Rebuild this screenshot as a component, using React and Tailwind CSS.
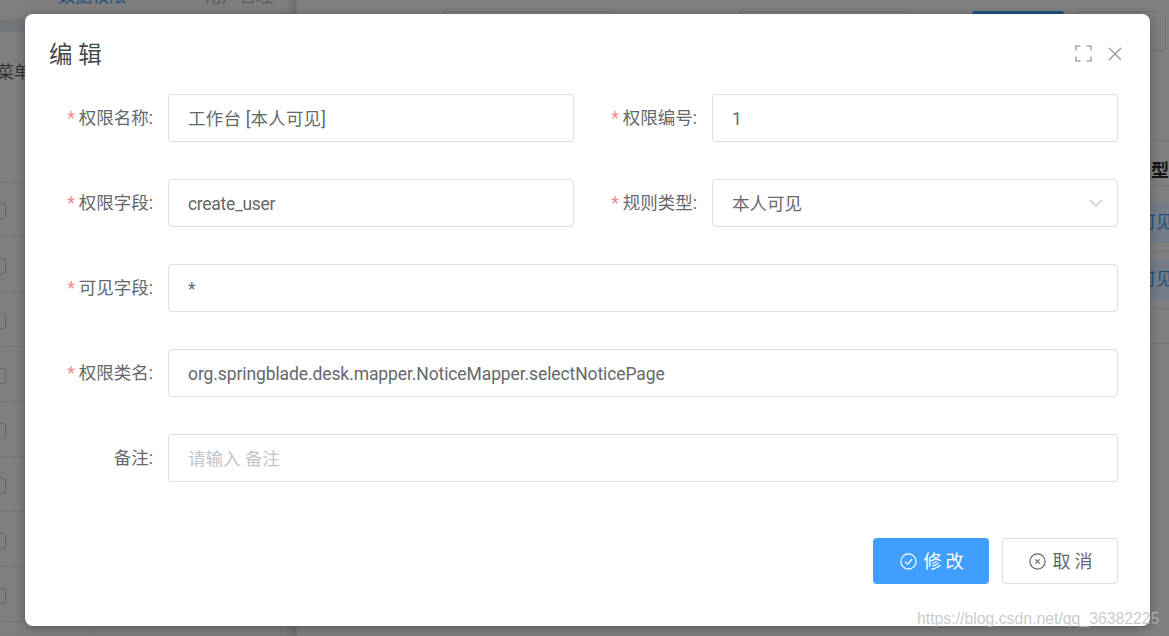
const cjk = { fontFamily: 'Roboto, "Noto Sans CJK SC", sans-serif' };

function Field({ label, required = true, children }) {
  return (
    <div className="flex h-12 items-center min-w-0 flex-1">
      <label className="w-[114px] shrink-0 whitespace-nowrap text-right text-[17.5px] text-[#66686c]">
        {required && <span className="mr-[4px] text-[#f78989]">*</span>}
        {label}:
      </label>
      <div className="ml-[15px] flex-1 min-w-0">{children}</div>
    </div>
  );
}

function Input({ value, placeholder, chevron, spacing = "" }) {
  return (
    <div className="flex h-12 items-center justify-between rounded-[4px] border border-[#dcdfe6] bg-white pl-[19px] pr-[14px] text-[17.5px] text-[#66686c]">
      <span className={`pt-[2px] ${placeholder ? "text-[#c0c4cc]" : ""} ${spacing}`}>{value || placeholder}</span>
      {chevron && (
        <svg width="14" height="8" viewBox="0 0 14 8" fill="none" stroke="#c0c4cc" strokeWidth="1.2">
          <path d="M1 1l6 6 6-6" />
        </svg>
      )}
    </div>
  );
}

function Backdrop() {
  const rows = [182, 236, 291, 346, 401, 456, 511, 566, 621];
  return (
    <div className="absolute inset-0">
      <div className="absolute left-0 top-0 h-full w-[297px] border-r border-[#767676] bg-[#7f7f7f] shadow-[inset_-10px_0_8px_-4px_rgba(0,0,0,0.12)]" />
      <div className="absolute left-0 top-[19px] h-[13px] w-[25px] bg-[#74777a]" />
      <div className="absolute left-[-3px] top-[60px] text-[17px] text-[#303030]">菜单</div>
      <div className="absolute left-[58px] top-[-16px] text-[17px] text-[#1d4f80]">数据权限</div>
      <div className="absolute left-[136px] top-[-16px] text-[14px] text-[#1d4f80]">×</div>
      <div className="absolute left-[205px] top-[-16px] text-[17px] text-[#5a5a5a]">用户管理</div>
      {rows.map((y) => (
        <div key={y} className="absolute left-0 h-px w-[25px] bg-[#757575]" style={{ top: y }} />
      ))}
      <div className="absolute left-0 top-[621px] h-px w-[297px] bg-[#757575]" />
      {[203, 258, 313, 368, 423, 478, 533, 588].map((y) => (
        <div key={y} className="absolute left-[-10px] h-4 w-4 rounded-[2px] border border-[#686868]" style={{ top: y }} />
      ))}
      <div className="absolute left-[93px] top-[621px] h-[15px] w-px bg-[#757575]" />
      <div className="absolute left-[280px] top-[621px] h-[15px] w-px bg-[#757575]" />
      <div className="absolute left-[442px] top-[11px] h-[3px] w-[173px] rounded-t-[4px] border-x border-t border-[#727272]" />
      <div className="absolute left-[738px] top-[11px] h-[3px] w-[172px] rounded-t-[4px] border-x border-t border-[#727272]" />
      <div className="absolute left-[972px] top-[11px] h-[3px] w-[92px] rounded-t-[4px] bg-[#205080]" />
      <div className="absolute left-[1076px] top-[11px] h-[40px] w-[90px] rounded-[4px] border border-[#727272]" />
      {[140, 185, 251, 308, 343].map((y) => (
        <div key={y} className="absolute left-[1150px] h-px w-[19px] bg-[#757575]" style={{ top: y }} />
      ))}
      <div className="absolute left-[1133px] top-[157px] whitespace-nowrap text-[18px] font-bold text-[#151515]">类型</div>
      <div className="absolute left-[1150px] top-[203px] h-[40px] w-[19px] border-y border-[#6f7b8a] bg-[#747d88]" />
      <div className="absolute left-[1150px] top-[260px] h-[40px] w-[19px] border-y border-[#6f7b8a] bg-[#747d88]" />
      <div className="absolute left-[1139px] top-[210px] whitespace-nowrap text-[17px] text-[#1d4f80]">可见</div>
      <div className="absolute left-[1139px] top-[267px] whitespace-nowrap text-[17px] text-[#1d4f80]">可见</div>
    </div>
  );
}

export default function App() {
  return (
    <div className="relative h-[636px] w-[1169px] overflow-hidden bg-[#808080]" style={cjk}>
      <Backdrop />
      <div className="relative ml-[25px] mt-[14px] inline-block h-[612px] w-[1125px] rounded-[8px] bg-white align-top shadow-[0_2px_12px_rgba(0,0,0,0.3)]">
        <div className="flex items-center justify-between pl-[24px] pr-[27px] pt-[24px]">
          <h1 className="text-[23.5px] leading-[34px] font-normal text-[#48494b]">编 辑</h1>
          <div className="mb-[3px] flex items-center gap-[15px]">
            <svg width="17" height="17" viewBox="0 0 17 17" fill="none" stroke="#a9adb5" strokeWidth="1.7">
              <path d="M1 5.5V1h4.5M11.5 1H16v4.5M16 11.5V16h-4.5M5.5 16H1v-4.5" />
            </svg>
            <svg width="16" height="16" viewBox="0 0 16 16" fill="none" stroke="#909399" strokeWidth="1.2">
              <path d="M2 2l12 12M14 2L2 14" />
            </svg>
          </div>
        </div>
        <div className="ml-[14px] mr-[32px] mt-[22px] flex flex-col gap-[37px]">
          <div className="flex">
            <div className="w-[535px] shrink-0"><Field label="权限名称"><Input value="工作台 [本人可见]" spacing="tracking-[0.2px]" /></Field></div>
            <div className="ml-[9px] flex-1"><Field label="权限编号"><Input value="1" /></Field></div>
          </div>
          <div className="flex">
            <div className="w-[535px] shrink-0"><Field label="权限字段"><Input value="create_user" spacing="tracking-[-0.3px]" /></Field></div>
            <div className="ml-[9px] flex-1"><Field label="规则类型"><Input value="本人可见" chevron /></Field></div>
          </div>
          <Field label="可见字段"><Input value="*" /></Field>
          <Field label="权限类名"><Input value="org.springblade.desk.mapper.NoticeMapper.selectNoticePage" spacing="tracking-[-0.1px]" /></Field>
          <Field label="备注" required={false}><Input placeholder="请输入 备注" /></Field>
        </div>
        <div className="mr-[32px] mt-[56px] flex justify-end gap-[13px]">
          <button className="flex h-[46px] w-[116px] items-center justify-center gap-[7px] rounded-[4px] bg-[#409eff] pl-[5px] text-[18px] tracking-[4px] text-white">
            <svg width="17" height="17" viewBox="0 0 17 17" fill="none" stroke="currentColor" strokeWidth="1.2">
              <circle cx="8.5" cy="8.5" r="7.6" /><path d="M5 8.7l2.6 2.5L12.2 6" />
            </svg>
            修改
          </button>
          <button className="flex h-[46px] w-[116px] items-center justify-center gap-[7px] rounded-[4px] border border-[#dcdfe6] bg-white pl-[5px] text-[18px] tracking-[4px] text-[#66686c]">
            <svg width="17" height="17" viewBox="0 0 17 17" fill="none" stroke="currentColor" strokeWidth="1.2">
              <circle cx="8.5" cy="8.5" r="7.6" /><path d="M6.3 6.3l4.4 4.4M10.7 6.3l-4.4 4.4" />
            </svg>
            取消
          </button>
        </div>
      </div>
      <div className="absolute left-[917px] top-[607px] whitespace-nowrap text-[15.8px] text-[#bdbdbd]/80" style={{ fontFamily: '"Liberation Sans", sans-serif' }}>https://blog.csdn.net/qq_36382225</div>
    </div>
  );
}
